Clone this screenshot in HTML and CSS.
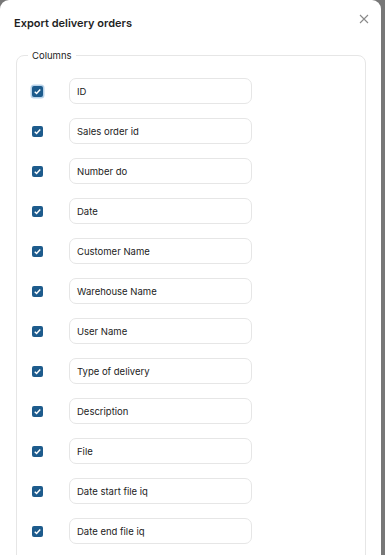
FILE: index.html
```html
<!DOCTYPE html>
<html>
<head>
<meta charset="utf-8">
<link rel="stylesheet" href="styles.css">
</head>
<body>
<div class="backdrop">
  <div class="modal">
    <div class="header">
      <h1 class="title">Export delivery orders</h1>
      <button class="close" aria-label="Close">
        <svg width="10" height="10" viewBox="0 0 10 10"><path d="M1 1L9 9M9 1L1 9" stroke="#8a8a8a" stroke-width="1.1" fill="none"/></svg>
      </button>
    </div>
    <fieldset class="columns">
      <legend class="legend">Columns</legend>
      <div class="row"><span class="check focus"><svg viewBox="0 0 12 12"><path d="M3 6.3L5 8.2L9 3.8" stroke="#fff" stroke-width="1.6" fill="none"/></svg></span><div class="field">ID</div></div>
      <div class="row"><span class="check"><svg viewBox="0 0 12 12"><path d="M3 6.3L5 8.2L9 3.8" stroke="#fff" stroke-width="1.6" fill="none"/></svg></span><div class="field">Sales order id</div></div>
      <div class="row"><span class="check"><svg viewBox="0 0 12 12"><path d="M3 6.3L5 8.2L9 3.8" stroke="#fff" stroke-width="1.6" fill="none"/></svg></span><div class="field">Number do</div></div>
      <div class="row"><span class="check"><svg viewBox="0 0 12 12"><path d="M3 6.3L5 8.2L9 3.8" stroke="#fff" stroke-width="1.6" fill="none"/></svg></span><div class="field">Date</div></div>
      <div class="row"><span class="check"><svg viewBox="0 0 12 12"><path d="M3 6.3L5 8.2L9 3.8" stroke="#fff" stroke-width="1.6" fill="none"/></svg></span><div class="field">Customer Name</div></div>
      <div class="row"><span class="check"><svg viewBox="0 0 12 12"><path d="M3 6.3L5 8.2L9 3.8" stroke="#fff" stroke-width="1.6" fill="none"/></svg></span><div class="field">Warehouse Name</div></div>
      <div class="row"><span class="check"><svg viewBox="0 0 12 12"><path d="M3 6.3L5 8.2L9 3.8" stroke="#fff" stroke-width="1.6" fill="none"/></svg></span><div class="field">User Name</div></div>
      <div class="row"><span class="check"><svg viewBox="0 0 12 12"><path d="M3 6.3L5 8.2L9 3.8" stroke="#fff" stroke-width="1.6" fill="none"/></svg></span><div class="field">Type of delivery</div></div>
      <div class="row"><span class="check"><svg viewBox="0 0 12 12"><path d="M3 6.3L5 8.2L9 3.8" stroke="#fff" stroke-width="1.6" fill="none"/></svg></span><div class="field">Description</div></div>
      <div class="row"><span class="check"><svg viewBox="0 0 12 12"><path d="M3 6.3L5 8.2L9 3.8" stroke="#fff" stroke-width="1.6" fill="none"/></svg></span><div class="field">File</div></div>
      <div class="row"><span class="check"><svg viewBox="0 0 12 12"><path d="M3 6.3L5 8.2L9 3.8" stroke="#fff" stroke-width="1.6" fill="none"/></svg></span><div class="field">Date start file iq</div></div>
      <div class="row"><span class="check"><svg viewBox="0 0 12 12"><path d="M3 6.3L5 8.2L9 3.8" stroke="#fff" stroke-width="1.6" fill="none"/></svg></span><div class="field">Date end file iq</div></div>
    </fieldset>
  </div>
</div>
</body>
</html>
```

FILE: styles.css
```css
html, body {
  margin: 0;
  padding: 0;
  height: 100%;
  overflow: hidden;
}
body {
  font-family: Inter, "Liberation Sans", sans-serif;
  background: #777777;
  color: #222;
}
.backdrop {
  height: 100%;
  display: flex;
}
.modal {
  width: 381px;
  background: #fff;
  border-radius: 9px 9px 0 0;
  box-sizing: border-box;
  padding: 0 15px 0 16px;
}
.header {
  display: flex;
  justify-content: space-between;
  align-items: center;
  height: 44px;
  margin-left: -2px;
}
.title {
  margin: 0;
  font-size: 11px;
  font-weight: 600;
  color: #1f1f1f;
  padding-top: 1px;
}
.close {
  border: 0;
  background: none;
  padding: 0;
  width: 10px;
  height: 10px;
  display: flex;
  margin-top: -7px;
  margin-right: -3px;
}
.columns {
  margin: 6px 0 0 0;
  border: 1px solid #e6e6e6;
  border-radius: 8px;
  padding: 17px 0 24px 15px;
  display: flex;
  flex-direction: column;
  gap: 14px;
}
.legend {
  font-size: 9.5px;
  color: #222;
  padding: 0 4px;
  margin-left: -4px;
}
.row {
  display: flex;
  align-items: center;
  gap: 26px;
}
.check {
  width: 11px;
  height: 11px;
  border-radius: 2px;
  background: #1d5b8c;
  display: flex;
  align-items: center;
  justify-content: center;
}
.check svg {
  width: 11px;
  height: 11px;
}
.check.focus {
  box-shadow: 0 0 0 1.5px #b9d3ea;
}
.field {
  width: 183px;
  height: 26px;
  box-sizing: border-box;
  border: 1px solid #e6e6e6;
  border-radius: 7px;
  padding: 0 7px;
  display: flex;
  align-items: center;
  font-size: 9.5px;
  color: #222;
}
```
